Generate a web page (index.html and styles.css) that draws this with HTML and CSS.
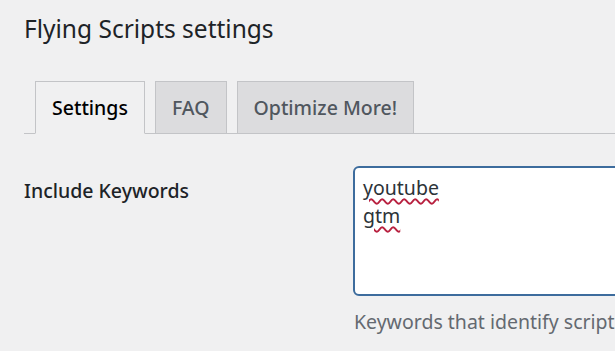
FILE: index.html
```html
<!DOCTYPE html>
<html lang="en">
<head>
    <meta charset="UTF-8">
    <title>Flying Scripts settings</title>
    <link rel="stylesheet" href="styles.css">
</head>
<body>
<div class="wrap">
    <h1 class="page-title">Flying Scripts settings</h1>

    <nav class="tabs">
        <a class="tab tab-active" href="#">Settings</a>
        <a class="tab" href="#">FAQ</a>
        <a class="tab" href="#">Optimize More!</a>
    </nav>

    <div class="form-row">
        <div class="form-label">Include Keywords</div>
        <div class="form-field">
            <div class="keywords-box">
                <span class="typo">youtube</span><br>
                <span class="typo">gtm</span>
            </div>
            <p class="description">Keywords that identify scripts that should load on user interaction</p>
        </div>
    </div>
</div>
</body>
</html>
```

FILE: styles.css
```css
html, body {
    margin: 0;
    padding: 0;
    background: #f0f0f1;
    overflow: hidden;
}
body {
    font-family: "Noto Sans", "Open Sans", sans-serif;
    color: #1d2327;
}
.wrap {
    padding: 0 0 0 24px;
}
.page-title {
    margin: 0;
    padding: 12px 0 0;
    font-size: 24.5px;
    font-weight: 400;
    line-height: 34px;
}
.tabs {
    display: flex;
    gap: 10px;
    margin-top: 35px;
    padding-left: 11px;
    border-bottom: 1px solid #c3c4c7;
}
.tab {
    display: block;
    padding: 12px 16px 11px;
    line-height: 28px;
    margin-bottom: -1px;
    font-size: 19.5px;
    font-weight: 500;
    color: #50575e;
    text-decoration: none;
    background: #dcdcde;
    border: 1px solid #c3c4c7;
}
.tab-active {
    background: #f0f0f1;
    color: #000;
    border-bottom-color: #f0f0f1;
}
.form-row {
    display: flex;
    margin-top: 32px;
}
.form-label {
    width: 329px;
    flex: none;
    padding-top: 11px;
    font-size: 19.5px;
    font-weight: 500;
    line-height: 28px;
}
.form-field {
    flex: none;
}
.keywords-box {
    box-sizing: border-box;
    width: 420px;
    height: 130px;
    padding: 6px 8px;
    background: #fff;
    border: 2px solid #3d6c9d;
    border-radius: 6px;
    font-size: 19.5px;
    line-height: 28px;
    color: #2c3338;
}
.typo {
    text-decoration: underline wavy #b8203f;
    text-decoration-thickness: 1.5px;
    text-underline-offset: 3px;
}
.description {
    margin: 12px 0 0 1px;
    font-size: 19.5px;
    line-height: 28px;
    color: #646970;
    white-space: nowrap;
}
```
